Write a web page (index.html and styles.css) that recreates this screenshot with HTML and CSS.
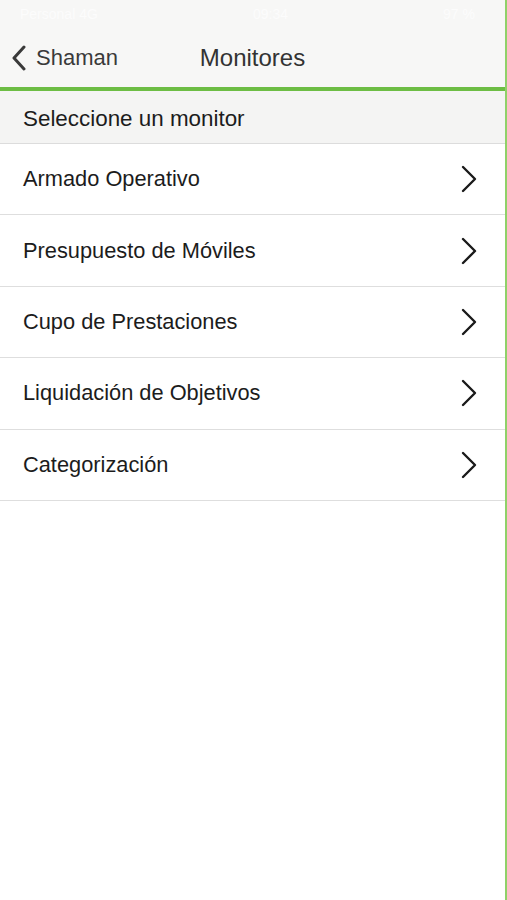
FILE: index.html
```html
<!DOCTYPE html>
<html>
<head>
  <title>Monitores</title>
  <meta name="viewport" content="width=device-width, initial-scale=1">
  <link rel="stylesheet" href="styles.css">
</head>
<body>
  <div class="screen">
    <div class="status-bar">
      <span class="status-left">Personal 4G</span>
      <span class="status-time">09:34</span>
      <span class="status-right">97 %</span>
    </div>
    <div class="nav-bar">
      <div class="nav-back">
        <svg class="back-icon" width="16" height="26" viewBox="0 0 16 26">
          <path d="M13 2 L3 13 L13 24" fill="none" stroke="#3a3a3a" stroke-width="3" stroke-linecap="round" stroke-linejoin="round"/>
        </svg>
        <span>Shaman</span>
      </div>
      <div class="nav-title">Monitores</div>
    </div>
    <div class="section-header">Seleccione un monitor</div>
    <ul class="monitor-list">
      <li class="monitor-item"><span>Armado Operativo</span><svg class="chevron" width="18" height="28" viewBox="0 0 18 28"><path d="M3 2 L15 14 L3 26" fill="none" stroke="#1a1a1a" stroke-width="2.4" stroke-linecap="round" stroke-linejoin="round"/></svg></li>
      <li class="monitor-item"><span>Presupuesto de Móviles</span><svg class="chevron" width="18" height="28" viewBox="0 0 18 28"><path d="M3 2 L15 14 L3 26" fill="none" stroke="#1a1a1a" stroke-width="2.4" stroke-linecap="round" stroke-linejoin="round"/></svg></li>
      <li class="monitor-item"><span>Cupo de Prestaciones</span><svg class="chevron" width="18" height="28" viewBox="0 0 18 28"><path d="M3 2 L15 14 L3 26" fill="none" stroke="#1a1a1a" stroke-width="2.4" stroke-linecap="round" stroke-linejoin="round"/></svg></li>
      <li class="monitor-item"><span>Liquidación de Objetivos</span><svg class="chevron" width="18" height="28" viewBox="0 0 18 28"><path d="M3 2 L15 14 L3 26" fill="none" stroke="#1a1a1a" stroke-width="2.4" stroke-linecap="round" stroke-linejoin="round"/></svg></li>
      <li class="monitor-item"><span>Categorización</span><svg class="chevron" width="18" height="28" viewBox="0 0 18 28"><path d="M3 2 L15 14 L3 26" fill="none" stroke="#1a1a1a" stroke-width="2.4" stroke-linecap="round" stroke-linejoin="round"/></svg></li>
    </ul>
  </div>
</body>
</html>
```

FILE: styles.css
```css
body {
  margin: 0;
  font-family: "Liberation Sans", Arial, sans-serif;
  background: #ffffff;
}

.screen {
  width: 505px;
  height: 900px;
  border-right: 2px solid #8fd168;
  background: #ffffff;
}

.status-bar {
  height: 28px;
  background: #f7f7f6;
  display: flex;
  align-items: center;
  justify-content: space-between;
  padding: 0 30px 0 20px;
  font-size: 14px;
  color: #fcfcfc;
}

.nav-bar {
  height: 59px;
  background: #f7f7f6;
  border-bottom: 4px solid #6dbd44;
  display: flex;
  align-items: center;
  position: relative;
}

.nav-back {
  display: flex;
  align-items: center;
  gap: 9px;
  padding-left: 11px;
  font-size: 22px;
  color: #3a3a3a;
}

.nav-title {
  position: absolute;
  left: 0;
  right: 0;
  text-align: center;
  font-size: 24px;
  color: #333333;
  pointer-events: none;
}

.section-header {
  height: 49px;
  background: #f4f4f3;
  border-bottom: 1px solid #dcdcdc;
  display: flex;
  align-items: center;
  padding: 3px 0 0 23px;
  font-size: 22.4px;
  color: #1c1c1c;
}

.monitor-list {
  list-style: none;
  margin: 0;
  padding: 0;
}

.monitor-item {
  height: 70.4px;
  border-bottom: 1px solid #dedede;
  display: flex;
  align-items: center;
  justify-content: space-between;
  padding: 0 27px 0 23px;
  font-size: 21.8px;
  color: #1c1c1c;
}
```
